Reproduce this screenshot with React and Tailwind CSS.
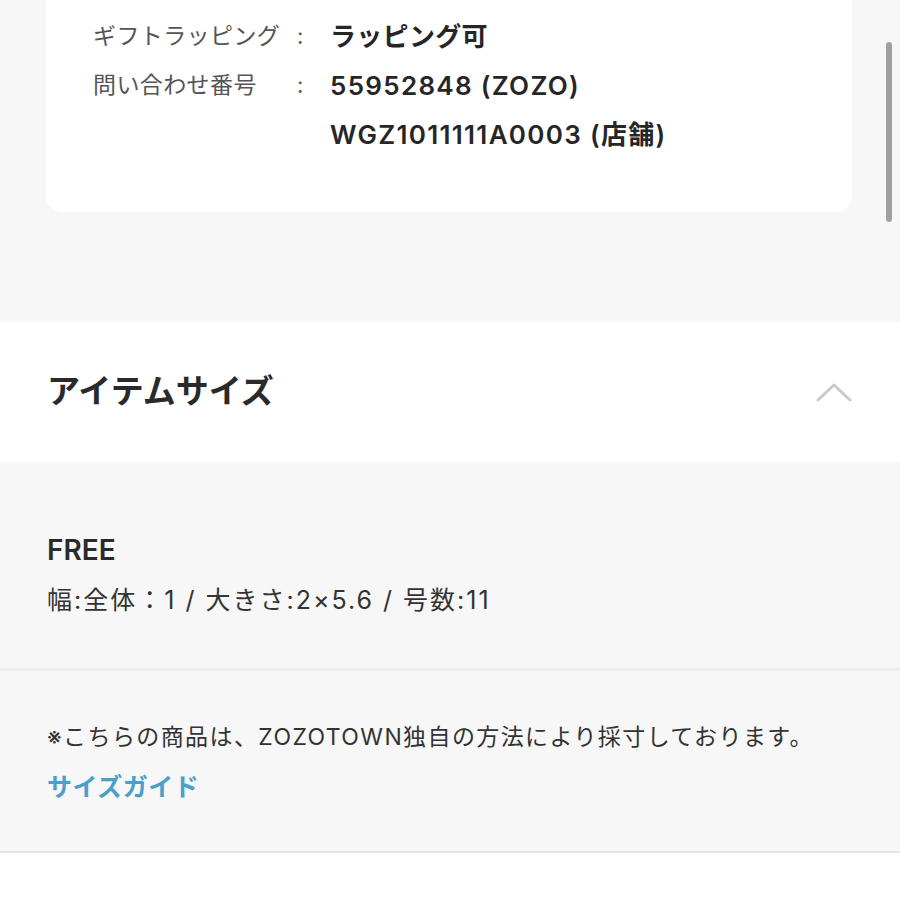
export default function App() {
  const font = { fontFamily: '"Inter", "Noto Sans CJK JP", "Noto Sans", sans-serif' };
  return (
    <div className="relative w-[900px] h-[900px] overflow-hidden bg-[#f7f7f7]" style={font}>
      {/* info card */}
      <div className="mx-[46px] w-[806px] bg-white rounded-b-[16px] pt-[12px] pb-[53px]">
        <div className="flex items-center h-[49px] pl-[47px]">
          <div className="w-[204px] text-[23px] text-[#555] tracking-[0.4px]">ギフトラッピング</div>
          <div className="w-[33px] text-[22px] text-[#555]">:</div>
          <div className="text-[26px] font-semibold text-[#262626] tracking-[0.3px]">ラッピング可</div>
        </div>
        <div className="flex items-center h-[49px] pl-[47px]">
          <div className="w-[204px] text-[23px] text-[#555] tracking-[0.4px]">問い合わせ番号</div>
          <div className="w-[33px] text-[22px] text-[#555]">:</div>
          <div className="text-[26px] font-semibold text-[#262626] tracking-[1.3px]">55952848 (ZOZO)</div>
        </div>
        <div className="flex items-center h-[49px] pl-[284px]">
          <div className="text-[26px] font-semibold text-[#262626] tracking-[1.3px]">WGZ1011111A0003 (店舗)</div>
        </div>
      </div>

      <div className="h-[110px]" />

      {/* section header */}
      <div className="h-[140px] bg-white flex items-center justify-between pl-[47px] pr-[48px]">
        <div className="text-[33px] font-bold text-[#2a2a2a]">アイテムサイズ</div>
        <svg width="36" height="20" viewBox="0 0 36 20" fill="none">
          <path d="M2 18 L18 3 L34 18" stroke="#c9c9c9" strokeWidth="3" strokeLinecap="round" strokeLinejoin="round" />
        </svg>
      </div>

      {/* size content */}
      <div className="pl-[47px] pt-[70px] pb-[49px]">
        <div className="h-[36px] flex items-center text-[28px] font-semibold text-[#2a2a2a]">FREE</div>
        <div className="mt-[15px] h-[36px] flex items-center text-[25px] text-[#333] tracking-[2px]">幅:全体：1 / 大きさ:2×5.6 / 号数:11</div>
      </div>
      <div className="h-[3px] bg-[#ebebeb]" />

      <div className="pl-[47px] pt-[48px] pb-[45px]">
        <div className="h-[36px] flex items-center text-[23px] text-[#333] tracking-[1.4px]">※こちらの商品は、ZOZOTOWN独自の方法により採寸しております。</div>
        <div className="mt-[15px] h-[36px] flex items-center text-[25px] font-bold text-[#4b9fc9] tracking-[0.5px]">サイズガイド</div>
      </div>
      <div className="h-[2px] bg-[#e6e6e6]" />
      <div className="h-[60px] bg-white" />

      {/* scrollbar overlay */}
      <div className="absolute left-[886px] top-[42px] w-[6px] h-[180px] rounded-full bg-[#a0a0a0]" />
    </div>
  );
}
